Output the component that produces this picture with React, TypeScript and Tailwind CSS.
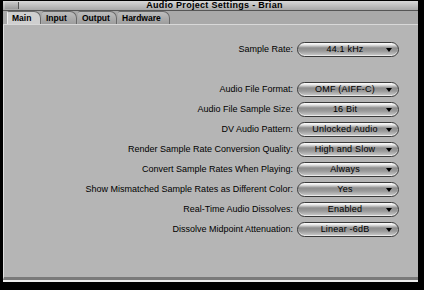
import React from "react";

const font = { fontFamily: '"Liberation Sans", Arial, sans-serif' };

function Popup({ value }: { value: string }) {
  return (
    <div className="relative w-[102px] h-[15px] rounded-full border border-[#3a3a3a] bg-[linear-gradient(to_bottom,#ffffff_0%,#e6e6e6_14%,#8e8e8e_38%,#9a9a9a_62%,#cfcfcf_100%)] shadow-[inset_0_-1px_0_#e8e8e8] flex items-center">
      <span className="flex-1 text-center text-[9px] leading-none text-black pr-[6px] tracking-[0.2px]">{value}</span>
      <span className="absolute right-[6px] top-[5px] w-0 h-0 border-l-[3px] border-r-[3px] border-t-[4px] border-l-transparent border-r-transparent border-t-black" />
    </div>
  );
}

function Row({ label, value }: { label: string; value: string }) {
  return (
    <div className="flex items-center justify-end h-[20px] gap-[4px]">
      <span className="text-[9px] leading-none text-black">{label}</span>
      <Popup value={value} />
    </div>
  );
}

function Tab({ label, active, w }: { label: string; active?: boolean; w: string }) {
  return (
    <div
      className={
        "h-[13px] flex items-center pl-[4px] rounded-tr-[7px] rounded-tl-[2px] border-t border-r border-[#6a6a6a] text-[8.5px] font-bold leading-none text-black " +
        w +
        (active ? " bg-[#cfcfcf] border-l border-l-[#eeeeee]" : " bg-[linear-gradient(to_bottom,#bdbdbd,#9d9d9d)]")
      }
    >
      {label}
    </div>
  );
}

export default function App() {
  return (
    <div className="w-[424px] h-[290px] bg-black pl-[3px] pr-[6px] pt-[1px] pb-[8px]" style={font}>
      <div className="w-full h-full flex flex-col bg-[#b5b5b5]">
        {/* Title bar */}
        <div className="relative h-[10px] bg-[linear-gradient(to_bottom,#d8d8d8,#a8a8a8)] border-b border-[#555] flex items-center justify-center">
          <div className="absolute left-[2px] top-[1px] w-[14px] h-[7px] border-r border-[#555] bg-[linear-gradient(to_bottom,#c8c8c8,#9a9a9a)]" />
          <span className="text-[9px] font-bold leading-none text-black tracking-[0.3px] pl-[8px]">Audio Project Settings - Brian</span>
        </div>
        {/* Tabs */}
        <div className="h-[14px] bg-[#a9a9a9] flex items-end pl-[4px] gap-[1px] border-b border-[#d8d8d8]">
          <Tab label="Main" active w="w-[34px]" />
          <Tab label="Input" w="w-[35px]" />
          <Tab label="Output" w="w-[39px]" />
          <Tab label="Hardware" w="w-[52px]" />
        </div>
        {/* Panel */}
        <div className="flex-1 flex flex-col pt-[14px] pr-[19px] border-l border-[#e0e0e0] border-b-[3px] border-b-[#7a7a7a]">
          <Row label="Sample Rate:" value="44.1 kHz" />
          <div className="h-[20px]" />
          <Row label="Audio File Format:" value="OMF (AIFF-C)" />
          <Row label="Audio File Sample Size:" value="16 Bit" />
          <Row label="DV Audio Pattern:" value="Unlocked Audio" />
          <Row label="Render Sample Rate Conversion Quality:" value="High and Slow" />
          <Row label="Convert Sample Rates When Playing:" value="Always" />
          <Row label="Show Mismatched Sample Rates as Different Color:" value="Yes" />
          <Row label="Real-Time Audio Dissolves:" value="Enabled" />
          <Row label="Dissolve Midpoint Attenuation:" value="Linear -6dB" />
        </div>
        <div className="h-[2px] bg-[#eeeeee]" />
      </div>
    </div>
  );
}
